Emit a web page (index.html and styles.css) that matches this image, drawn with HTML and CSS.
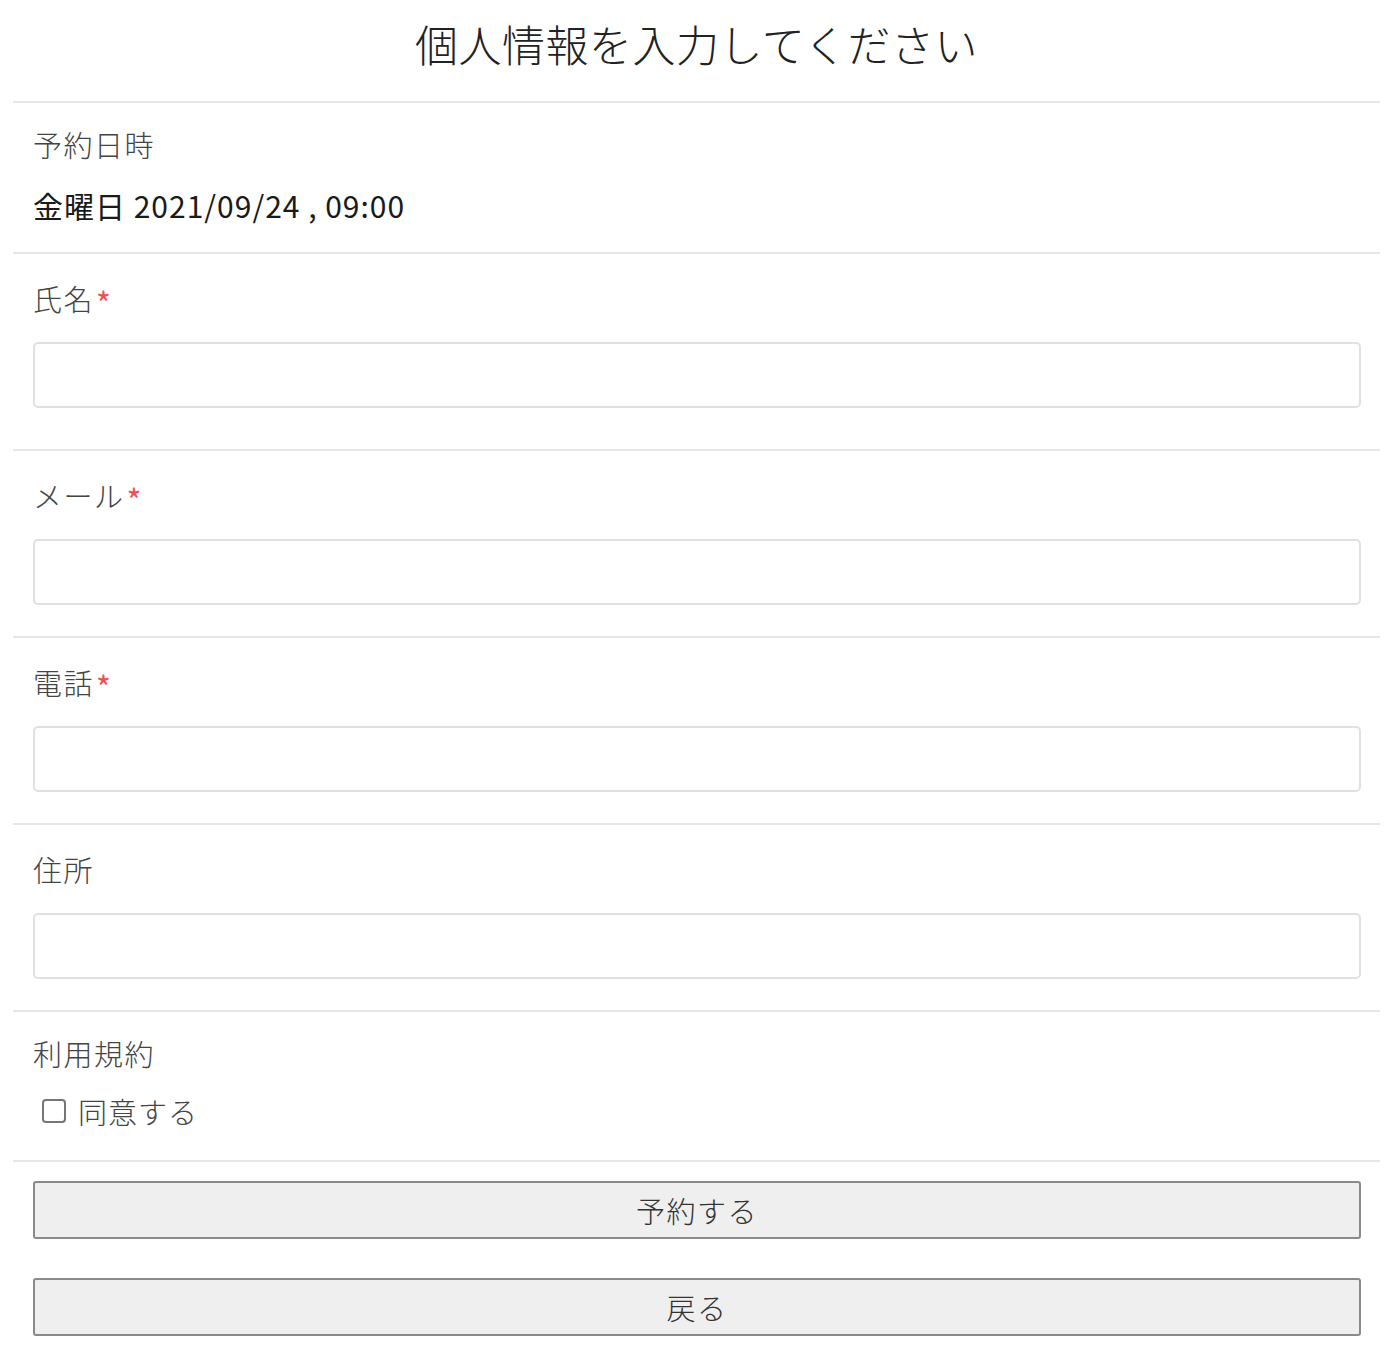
FILE: index.html
```html
<!DOCTYPE html>
<html lang="ja">
<head>
<meta charset="utf-8">
<title>個人情報入力</title>
<link rel="stylesheet" href="styles.css">
</head>
<body>
<div class="page">
  <h1 class="title">個人情報を入力してください</h1>
  <form class="form">
    <section class="section section--info">
      <div class="label">予約日時</div>
      <div class="value">金曜日 2021/09/24 , 09:00</div>
    </section>
    <section class="section section--first">
      <div class="label">氏名<span class="req">*</span></div>
      <input class="input" type="text">
    </section>
    <section class="section">
      <div class="label">メール<span class="req">*</span></div>
      <input class="input" type="text">
    </section>
    <section class="section">
      <div class="label">電話<span class="req">*</span></div>
      <input class="input" type="text">
    </section>
    <section class="section">
      <div class="label">住所</div>
      <input class="input" type="text">
    </section>
    <section class="section section--terms">
      <div class="label">利用規約</div>
      <label class="check"><span class="box"></span><span class="check-text">同意する</span></label>
    </section>
    <div class="actions">
      <button type="button" class="btn">予約する</button>
      <button type="button" class="btn">戻る</button>
    </div>
  </form>
</div>
</body>
</html>
```
FILE: styles.css
```css
* { box-sizing: border-box; }
html, body { margin: 0; padding: 0; background: #fff; }
body {
  font-family: "Noto Sans CJK JP", "Noto Sans", sans-serif;
  color: #555;
}
.page {
  padding: 13px 20px 0 13px;
}
.title {
  margin: 0 0 28px;
  font-size: 43px;
  font-weight: 300;
  line-height: 60px;
  text-align: center;
  color: #222;
  letter-spacing: 0.5px;
}
.section {
  border-top: 2px solid #e6e6e6;
  padding: 24px 19px 31px 20px;
}
.section--info { padding: 21px 20px 27px; }
.section--first { padding-bottom: 41px; }
.section--terms { padding: 21px 20px 29px; }
.label {
  font-size: 29px;
  font-weight: 300;
  line-height: 40px;
  color: #444;
  letter-spacing: 1.5px;
  display: flex;
  align-items: center;
}
.req {
  color: #f05050;
  font-size: 32px;
  font-weight: 400;
  margin-left: 2px;
  line-height: 1;
  position: relative;
  top: 4px;
}
.value {
  margin-top: 21px;
  font-size: 30px;
  line-height: 40px;
  color: #1a1a1a;
  letter-spacing: 1px;
}
.input {
  display: block;
  width: 100%;
  height: 66px;
  margin-top: 24px;
  border: 2px solid #e0e0e0;
  border-radius: 5px;
  background: #fff;
  font-size: 28px;
  padding: 0 14px;
}
.check {
  margin-top: 18px;
  display: flex;
  align-items: center;
  height: 40px;
  padding-left: 9px;
}
.box {
  width: 24px;
  height: 24px;
  border: 2px solid #767676;
  border-radius: 4px;
  background: #fff;
}
.check-text {
  margin-left: 12px;
  font-size: 29px;
  font-weight: 300;
  line-height: 40px;
  color: #444;
  letter-spacing: 1px;
}
.actions {
  border-top: 2px solid #e6e6e6;
  padding: 19px 19px 0 20px;
  display: flex;
  flex-direction: column;
  gap: 39px;
}
.btn {
  display: block;
  width: 100%;
  height: 58px;
  border: 2px solid #8a8a8a;
  border-radius: 3px;
  background: #efefef;
  font-family: "Noto Sans CJK JP", sans-serif;
  font-size: 29px;
  font-weight: 300;
  color: #333;
  letter-spacing: 1.5px;
  padding: 0;
}
```
